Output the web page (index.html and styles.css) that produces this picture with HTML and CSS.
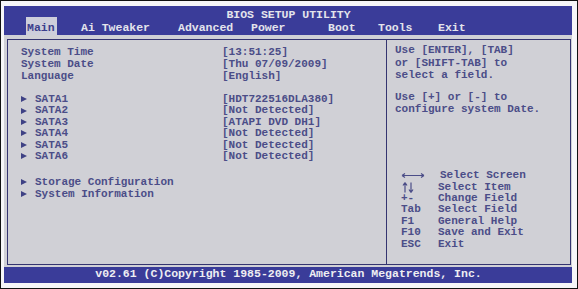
FILE: index.html
```html
<!DOCTYPE html>
<html>
<head>
<meta charset="utf-8">
<title>BIOS SETUP UTILITY</title>
<link rel="stylesheet" href="styles.css">
</head>
<body>
<div class="frame">
  <div class="screen">
    <header class="top">
      <div class="title">BIOS SETUP UTILITY</div>
      <nav class="tabs">
        <span class="tab active">Main</span>
        <span class="tab">Ai Tweaker</span>
        <span class="tab">Advanced</span>
        <span class="tab">Power</span>
        <span class="tab">Boot</span>
        <span class="tab">Tools</span>
        <span class="tab">Exit</span>
      </nav>
    </header>
    <main class="body">
      <div class="panel">
        <section class="left">
          <div class="group g1">
            <div class="row"><span>System Time</span><span>[13:51:25]</span></div>
            <div class="row"><span>System Date</span><span>[Thu 07/09/2009]</span></div>
            <div class="row"><span>Language</span><span>[English]</span></div>
          </div>
          <div class="group g2">
            <div class="row"><span class="sub"><i class="tri"></i>SATA1</span><span>[HDT722516DLA380]</span></div>
            <div class="row"><span class="sub"><i class="tri"></i>SATA2</span><span>[Not Detected]</span></div>
            <div class="row"><span class="sub"><i class="tri"></i>SATA3</span><span>[ATAPI DVD DH1]</span></div>
            <div class="row"><span class="sub"><i class="tri"></i>SATA4</span><span>[Not Detected]</span></div>
            <div class="row"><span class="sub"><i class="tri"></i>SATA5</span><span>[Not Detected]</span></div>
            <div class="row"><span class="sub"><i class="tri"></i>SATA6</span><span>[Not Detected]</span></div>
          </div>
          <div class="group g3">
            <div class="row"><span class="sub"><i class="tri"></i>Storage Configuration</span></div>
            <div class="row"><span class="sub"><i class="tri"></i>System Information</span></div>
          </div>
        </section>
        <aside class="right">
          <div class="help h1">Use [ENTER], [TAB]<br>or [SHIFT-TAB] to<br>select a field.</div>
          <div class="help h2">Use [+] or [-] to<br>configure system Date.</div>
          <div class="legend">
            <div class="key"><svg class="ico" width="24" height="11" viewBox="0 0 24 11"><path d="M1 5.5H23M1 5.5L4 3.5M1 5.5L4 7.5M23 5.5L20 3.5M23 5.5L20 7.5" stroke="currentColor" stroke-width="1.2" fill="none"/></svg></div><div class="desc shift">Select Screen</div>
            <div class="key"><svg class="ico" width="14" height="11" viewBox="0 0 14 11"><path d="M4 0.5V10.5M4 0.5L2 3.5M4 0.5L6 3.5M10 0.5V10.5M10 10.5L8 7.5M10 10.5L12 7.5" stroke="currentColor" stroke-width="1.2" fill="none"/></svg></div><div class="desc">Select Item</div>
            <div class="key">+-</div><div class="desc">Change Field</div>
            <div class="key">Tab</div><div class="desc">Select Field</div>
            <div class="key">F1</div><div class="desc">General Help</div>
            <div class="key">F10</div><div class="desc">Save and Exit</div>
            <div class="key">ESC</div><div class="desc">Exit</div>
          </div>
        </aside>
      </div>
    </main>
    <footer class="foot">v02.61 (C)Copyright 1985-2009, American Megatrends, Inc.</footer>
  </div>
</div>
</body>
</html>
```

FILE: styles.css
```css
* { box-sizing: border-box; }
html, body { margin: 0; padding: 0; background: #ffffff; }
body {
  font-family: "Liberation Mono", "Courier New", monospace;
  font-weight: bold;
}
.frame {
  width: 578px;
  height: 289px;
  border: 1px solid #111111;
  background: #f6f6f8;
  padding: 5px 5px 5px 3px;
}
.screen {
  width: 568px;
  height: 277px;
  display: flex;
  flex-direction: column;
  background: #3a3c99;
}
.top {
  height: 29px;
  display: flex;
  flex-direction: column;
  color: #e4e4ec;
  font-size: 11.5px;
}
.title {
  margin-top: 3px;
  height: 11px;
  line-height: 11px;
  text-align: center;
  padding-left: 1px;
}
.tabs {
  margin-top: -3px;
  height: 18px;
  display: grid;
  grid-template-columns: 54px 97px 73px 77px 50px 60px auto;
  padding-left: 22px;
}
.tab {
  padding: 5px 0 0 1px;
  line-height: 11px;
  height: 18px;
  justify-self: start;
}
.tab.active {
  background: #cdcedb;
  color: #3c3e8c;
  padding-right: 2px;
}
.body {
  height: 232px;
  background: #d0d0d6;
  padding: 4px 1px 2px 3px;
}
.panel {
  height: 226px;
  border: 1px solid #343470;
  display: grid;
  grid-template-columns: 378px 1fr;
  color: #4b4d88;
  font-size: 11px;
}
.left {
  padding: 6px 0 0 13px;
}
.group .row {
  display: grid;
  grid-template-columns: 201px auto;
  white-space: pre;
}
.g1 .row { line-height: 12px; height: 12px; }
.g2 { margin-top: 12px; }
.g2 .row { line-height: 11.4px; height: 11.4px; }
.g3 { margin-top: 14px; }
.g3 .row { line-height: 12px; height: 12px; }
.sub {
  display: flex;
  align-items: center;
}
.tri {
  display: inline-block;
  width: 0;
  height: 0;
  border-left: 6px solid #3e4185;
  border-top: 3.5px solid transparent;
  border-bottom: 3.5px solid transparent;
  margin-right: 8px;
  margin-top: -1px;
}
.right {
  border-left: 1px solid #343470;
  padding: 4px 0 14px 8px;
  display: flex;
  flex-direction: column;
  white-space: pre;
}
.h1 { line-height: 12.5px; }
.h2 { margin-top: 9.5px; line-height: 12px; }
.legend {
  margin-top: auto;
  display: grid;
  grid-template-columns: 37px auto;
  grid-auto-rows: 11.4px;
  line-height: 11.4px;
  padding-left: 6px;
}
.key {
  display: flex;
  align-items: center;
}
.ico { display: block; }
.desc.shift { padding-left: 2px; }
.foot {
  height: 16px;
  line-height: 14px;
  text-align: center;
  color: #eeeef2;
  font-size: 11.5px;
  padding-left: 1px;
}
```
